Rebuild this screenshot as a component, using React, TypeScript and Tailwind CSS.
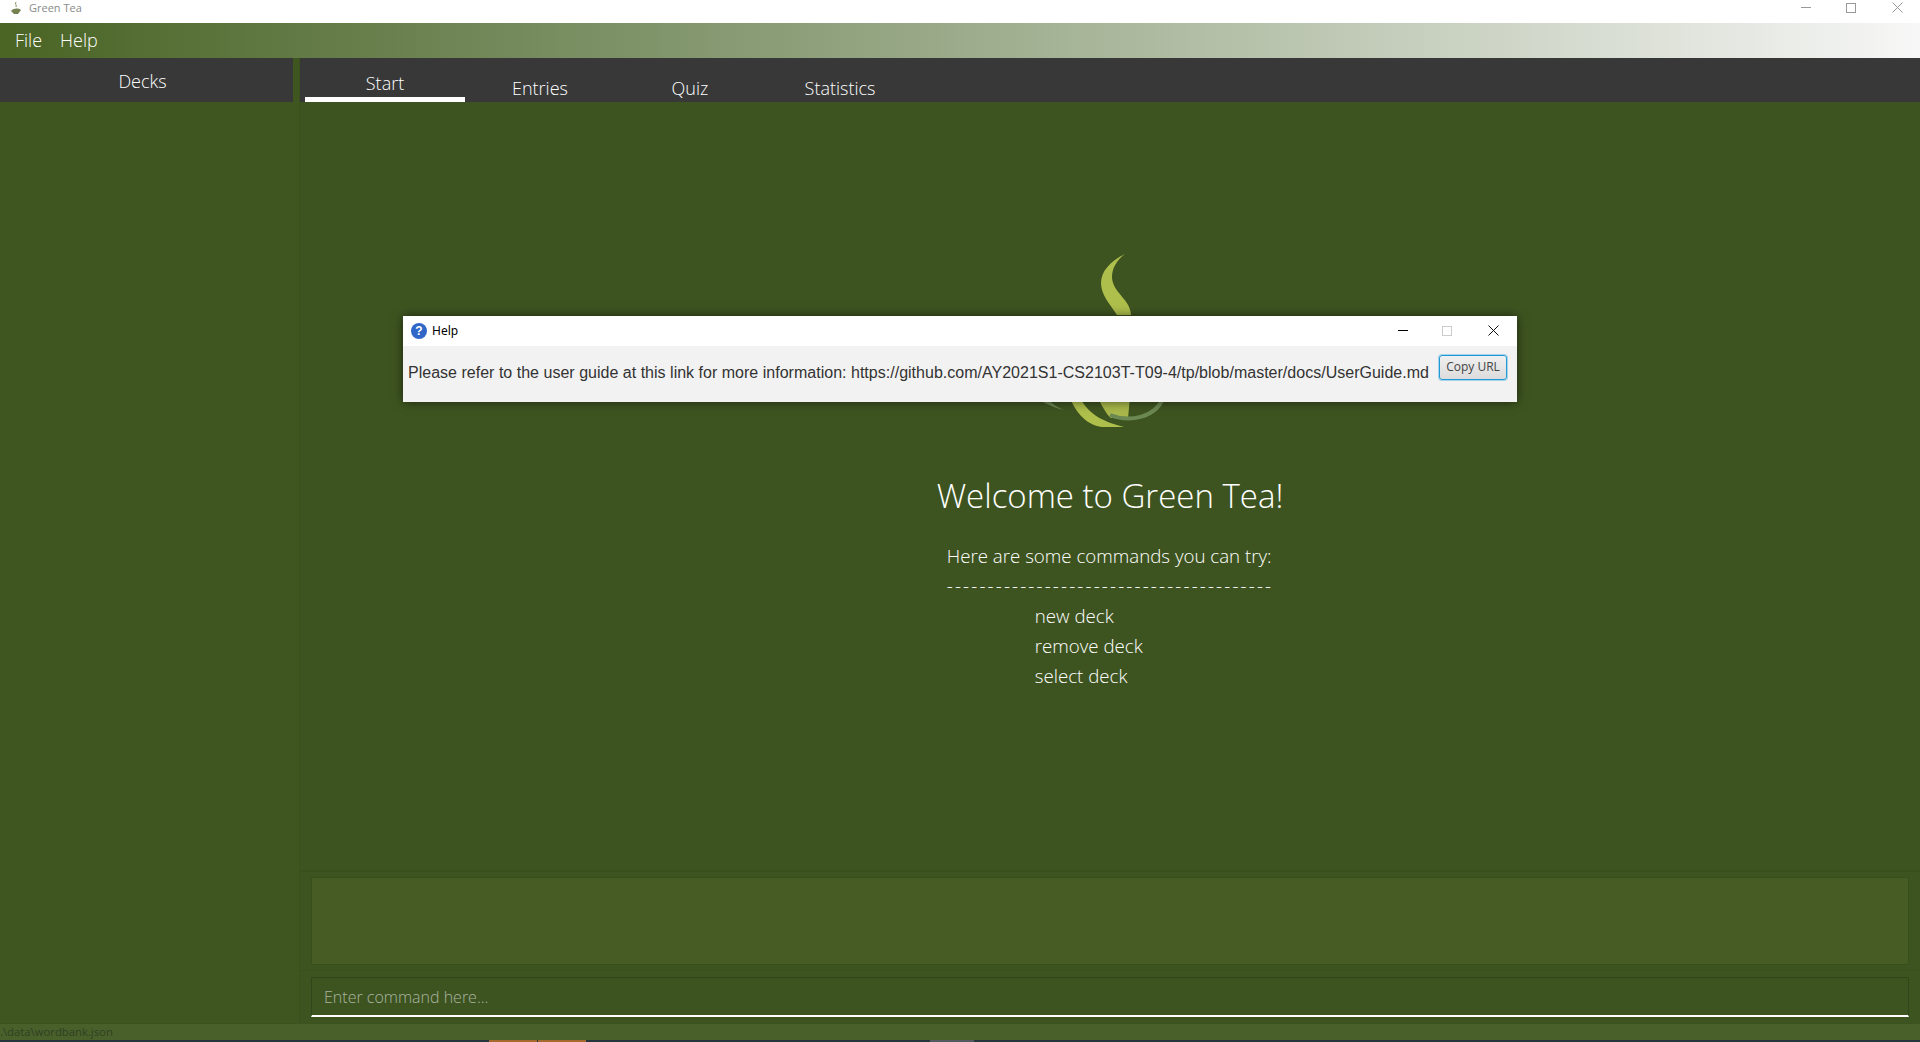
const ui = { fontFamily: '"Open Sans", "Noto Sans", sans-serif' };

function Logo() {
  return (
    <svg width="160" height="180" viewBox="0 0 160 180" className="block">
      <path d="M95 4C79 12 71 22 71 33C71 45 80 54 87 65L101 65C101 50 82 42 82 27C82 18 87 10 95 4Z" fill="#afbf4c" />
      <path d="M40 148C48 168 62 177 74 177L94 177C75 172 60 166 50 148Z" fill="#afbf4c" />
      <path d="M68 148C74 160 78 166 81 168L98 168C99 160 99 155 100 148Z" fill="#a9b84b" />
      <path d="M133 148C126 167 100 173 80 165" fill="none" stroke="#6c8853" strokeWidth="4" />
      <path d="M13 152Q22 157 34 160Q24 156 20 151Z" fill="#6c8853" />
    </svg>
  );
}

function Cross({ color }: { color: string }) {
  return (
    <svg width="11" height="11" viewBox="0 0 11 11">
      <path d="M0.5 0.5L10.5 10.5M10.5 0.5L0.5 10.5" stroke={color} strokeWidth="1" fill="none" />
    </svg>
  );
}

function HelpDialog() {
  return (
    <div className="absolute left-[403px] top-[316px] flex h-[86px] w-[1114px] flex-col bg-[#f2f2f2] font-normal shadow-[0_0_10px_rgba(0,0,0,0.55)]">
      <div className="flex h-[30px] items-center bg-white pb-[1px] pl-[8px] pr-[18px]">
        <span className="flex h-4 w-4 items-center justify-center rounded-full bg-[#2f66c8] text-[12px] font-bold leading-none text-white [font-family:'Liberation_Sans',sans-serif]">
          ?
        </span>
        <span className="ml-[5px] text-[12px] font-normal text-black [font-family:'Noto_Sans',sans-serif]">Help</span>
        <span className="ml-auto mr-[-1px] h-px w-[10px] bg-black" />
        <span className="ml-[35px] h-[10px] w-[10px] border border-[#cccccc]" />
        <span className="ml-[36px] flex"><Cross color="#111111" /></span>
      </div>
      <div className="flex flex-1 items-center pl-[5px] pr-[10px]">
        <span className="mb-[3px] whitespace-nowrap text-[16px] tracking-[0.015px] text-[#333333] [font-family:'Liberation_Sans',sans-serif]">
          Please refer to the user guide at this link for more information: https://github.com/AY2021S1-CS2103T-T09-4/tp/blob/master/docs/UserGuide.md
        </span>
        <button className="mb-[14px] ml-auto flex h-[25px] w-[68px] items-center justify-center rounded-[3px] border border-[#1e9ad6] bg-gradient-to-b from-[#f0f0f0] to-[#dcdcdc] text-[12px] font-normal text-[#444444] shadow-[0_0_0_1px_rgba(30,154,214,0.35)] [font-family:'Open_Sans',sans-serif]">
          Copy URL
        </button>
      </div>
    </div>
  );
}

export default function App() {
  return (
    <div className="relative flex h-screen w-full flex-col overflow-hidden bg-[#3f5620] font-light" style={ui}>
      <div className="flex h-[23px] shrink-0 items-center bg-white pl-[11px]">
        <svg width="10" height="14" viewBox="0 0 10 14" className="-translate-y-[3px]">
          <path d="M5 0C3.5 2 6 3 5 5" stroke="#7c8a50" strokeWidth="1" fill="none" />
          <path d="M0 9C3 6 7 6 10 8L7 12H3Z" fill="#76824f" />
        </svg>
        <span className="ml-[8px] -translate-y-[4px] text-[11px] font-normal leading-none text-[#8a8a8a]">Green Tea</span>
        <span className="ml-auto h-px w-[10px] -translate-y-[4px] bg-[#999999]" />
        <span className="ml-[35px] h-[10px] w-[10px] -translate-y-[4px] border border-[#999999]" />
        <span className="ml-[36px] mr-[17px] flex -translate-y-[4px]"><Cross color="#999999" /></span>
      </div>

      <div className="flex h-[35px] shrink-0 items-center gap-[18px] bg-gradient-to-r from-[#496423] to-[#f7f7f7] pl-[15px] text-[18px] text-white">
        <span>File</span>
        <span>Help</span>
      </div>

      <div className="flex min-h-0 flex-1">
        <aside className="w-[300px] shrink-0 border-r border-[#3a501d]">
          <div className="flex h-[44px] w-[293px] items-center justify-center bg-[#383838] pr-[8px] pt-[2px] text-[18px] text-white">
            Decks
          </div>
        </aside>

        <div className="flex min-w-0 flex-1 flex-col">
          <div className="flex h-[44px] shrink-0 bg-[#383838] pl-[5px] text-[18px] text-white">
            <div className="flex h-full w-[160px] items-start justify-center pt-[10px]">
              <span className="leading-[30px]">Start</span>
            </div>
            <div className="flex w-[150px] items-start justify-center pt-[15px] leading-[30px]">Entries</div>
            <div className="flex w-[150px] items-start justify-center pt-[15px] leading-[30px]">Quiz</div>
            <div className="flex w-[150px] items-start justify-center pt-[15px] leading-[30px]">Statistics</div>
          </div>

          <div className="relative flex-1 bg-[#3e5420]">
            <div className="absolute left-[5px] top-[-5px] h-[5px] w-[160px] bg-white" />
            <div className="flex flex-col items-center pt-[148px] text-white">
              <Logo />
              <h1 className="mt-[41px] text-[33px] font-light leading-[50px]">Welcome to Green Tea!</h1>
              <div className="mt-[20px] text-[18.7px] leading-[30px]">
                <p>Here are some commands you can try:</p>
                <p className="tracking-[2.15px]">----------------------------------------</p>
                <p className="pl-[88px]">new deck</p>
                <p className="pl-[88px]">remove deck</p>
                <p className="pl-[88px]">select deck</p>
              </div>
            </div>
          </div>

          <div className="shrink-0 border-t-2 border-[#3a4f1c] bg-[#3e5420] pl-[11px] pr-[11px] pt-[5px] pb-[5px]">
            <div className="h-[88px] border border-[#384e1b] bg-[#465c24]" />
          </div>
          <div className="shrink-0 border-t border-[#3a4f1c] bg-[#3e5420] pl-[11px] pr-[11px] pt-[6px] pb-[6px]">
            <div className="flex h-[40px] items-center border border-b-2 border-[#31471a] border-b-white bg-[#3e5420] pl-[12px] text-[16px] text-[#a9b5a0]">
              Enter command here...
            </div>
          </div>
        </div>
      </div>

      <div className="flex h-[17px] shrink-0 items-center border-t border-[#3d531f] bg-[#4a602b] text-[11.3px] font-normal leading-none text-[#2f3f22]">
        .\data\wordbank.json
      </div>
      <div className="relative flex h-[2px] shrink-0 bg-[#26343c]">
        <span className="absolute left-[489px] top-0 h-[2px] w-[48px] bg-[#a66a30]" />
        <span className="absolute left-[538px] top-0 h-[2px] w-[48px] bg-[#a66a30]" />
        <span className="absolute left-[930px] top-0 h-[2px] w-[44px] bg-[#555a60]" />
      </div>

      <HelpDialog />
    </div>
  );
}
